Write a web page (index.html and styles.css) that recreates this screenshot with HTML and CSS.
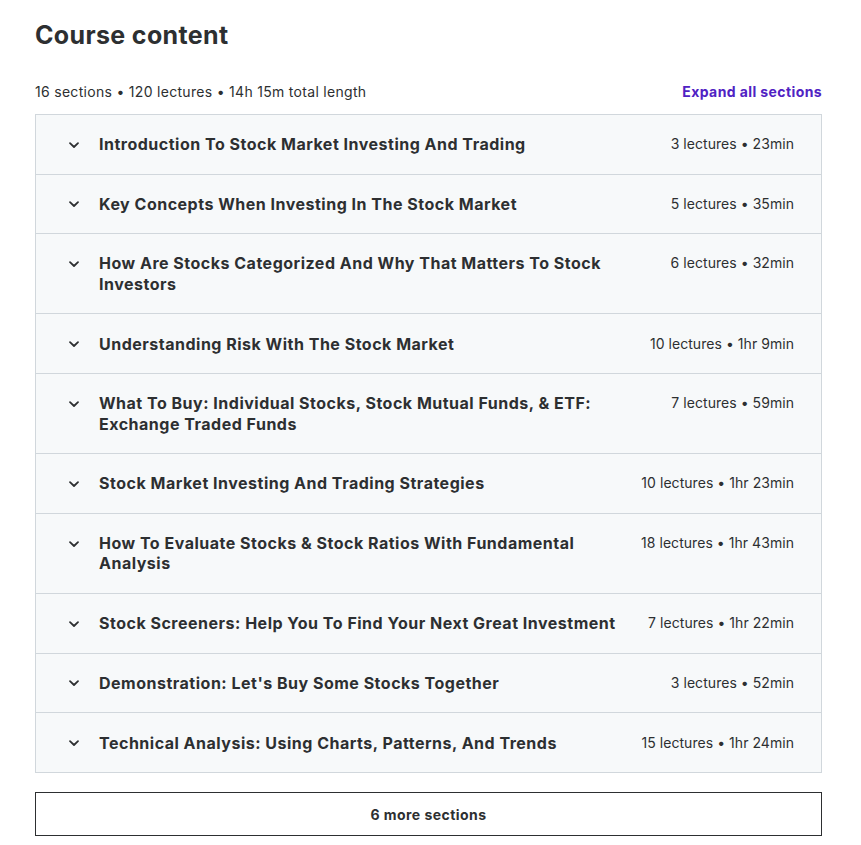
FILE: index.html
```html
<!DOCTYPE html>
<html lang="en">
<head>
<meta charset="utf-8">
<title>Course content</title>
<link rel="stylesheet" href="styles.css">
</head>
<body>
<div class="page">
  <h2 class="title">Course content</h2>
  <div class="summary">
    <span class="stats">16 sections • 120 lectures • 14h 15m total length</span>
    <button class="expand">Expand all sections</button>
  </div>
  <div class="accordion">
    <div class="row"><svg class="chev" viewBox="0 0 12 8"><path d="M2 2.2 L6 6 L10 2.2" /></svg><span class="name">Introduction To Stock Market Investing And Trading</span><span class="meta">3 lectures • 23min</span></div>
    <div class="row"><svg class="chev" viewBox="0 0 12 8"><path d="M2 2.2 L6 6 L10 2.2" /></svg><span class="name">Key Concepts When Investing In The Stock Market</span><span class="meta">5 lectures • 35min</span></div>
    <div class="row"><svg class="chev" viewBox="0 0 12 8"><path d="M2 2.2 L6 6 L10 2.2" /></svg><span class="name">How Are Stocks Categorized And Why That Matters To Stock Investors</span><span class="meta">6 lectures • 32min</span></div>
    <div class="row"><svg class="chev" viewBox="0 0 12 8"><path d="M2 2.2 L6 6 L10 2.2" /></svg><span class="name">Understanding Risk With The Stock Market</span><span class="meta">10 lectures • 1hr 9min</span></div>
    <div class="row"><svg class="chev" viewBox="0 0 12 8"><path d="M2 2.2 L6 6 L10 2.2" /></svg><span class="name">What To Buy: Individual Stocks, Stock Mutual Funds, &amp; ETF: Exchange Traded Funds</span><span class="meta">7 lectures • 59min</span></div>
    <div class="row"><svg class="chev" viewBox="0 0 12 8"><path d="M2 2.2 L6 6 L10 2.2" /></svg><span class="name">Stock Market Investing And Trading Strategies</span><span class="meta">10 lectures • 1hr 23min</span></div>
    <div class="row"><svg class="chev" viewBox="0 0 12 8"><path d="M2 2.2 L6 6 L10 2.2" /></svg><span class="name">How To Evaluate Stocks &amp; Stock Ratios With Fundamental Analysis</span><span class="meta">18 lectures • 1hr 43min</span></div>
    <div class="row"><svg class="chev" viewBox="0 0 12 8"><path d="M2 2.2 L6 6 L10 2.2" /></svg><span class="name">Stock Screeners: Help You To Find Your Next Great Investment</span><span class="meta">7 lectures • 1hr 22min</span></div>
    <div class="row"><svg class="chev" viewBox="0 0 12 8"><path d="M2 2.2 L6 6 L10 2.2" /></svg><span class="name">Demonstration: Let's Buy Some Stocks Together</span><span class="meta">3 lectures • 52min</span></div>
    <div class="row"><svg class="chev" viewBox="0 0 12 8"><path d="M2 2.2 L6 6 L10 2.2" /></svg><span class="name">Technical Analysis: Using Charts, Patterns, And Trends</span><span class="meta">15 lectures • 1hr 24min</span></div>
  </div>
  <button class="more">6 more sections</button>
</div>
</body>
</html>
```
FILE: styles.css
```css
* { box-sizing: border-box; }
html, body { margin: 0; padding: 0; background: #fff; }
body {
  font-family: Inter, "Noto Sans", sans-serif;
  color: #2d2f31;
}
.page {
  width: 787px;
  margin-left: 35px;
  padding-top: 18px;
}
.title {
  margin: 0;
  font-size: 25px;
  line-height: 34px;
  font-weight: 700;
  letter-spacing: 0.35px;
}
.summary {
  display: flex;
  justify-content: space-between;
  align-items: center;
  margin-top: 28px;
  height: 22px;
  margin-bottom: 12px;
}
.stats {
  font-size: 14px;
  letter-spacing: 0.3px;
}
.expand {
  border: 0;
  background: none;
  padding: 0;
  font-family: inherit;
  font-size: 14px;
  font-weight: 700;
  color: #5022c3;
  letter-spacing: 0.4px;
}
.accordion {
  border: 1px solid #d1d7dc;
  border-bottom: 0;
}
.row {
  display: flex;
  align-items: flex-start;
  background: #f7f9fa;
  border-bottom: 1px solid #d1d7dc;
  padding: 19.1px 27px 19.2px 32px;
}
.chev {
  width: 12px;
  height: 8px;
  margin-top: 6.5px;
  margin-right: 19px;
  flex: none;
  fill: none;
  stroke: #2d2f31;
  stroke-width: 1.8;
  stroke-linecap: round;
  stroke-linejoin: round;
}
.name {
  flex: 1;
  font-size: 16px;
  line-height: 20.4px;
  font-weight: 700;
  letter-spacing: 0.5px;
  padding-right: 24px;
}
.meta {
  flex: none;
  font-size: 14px;
  line-height: 20.4px;
  letter-spacing: 0.05px;
}
.more {
  display: block;
  width: 100%;
  height: 44px;
  margin-top: 19px;
  border: 1px solid #2d2f31;
  background: #fff;
  font-family: inherit;
  font-size: 14px;
  font-weight: 700;
  color: #2d2f31;
  letter-spacing: 0.45px;
}
```
